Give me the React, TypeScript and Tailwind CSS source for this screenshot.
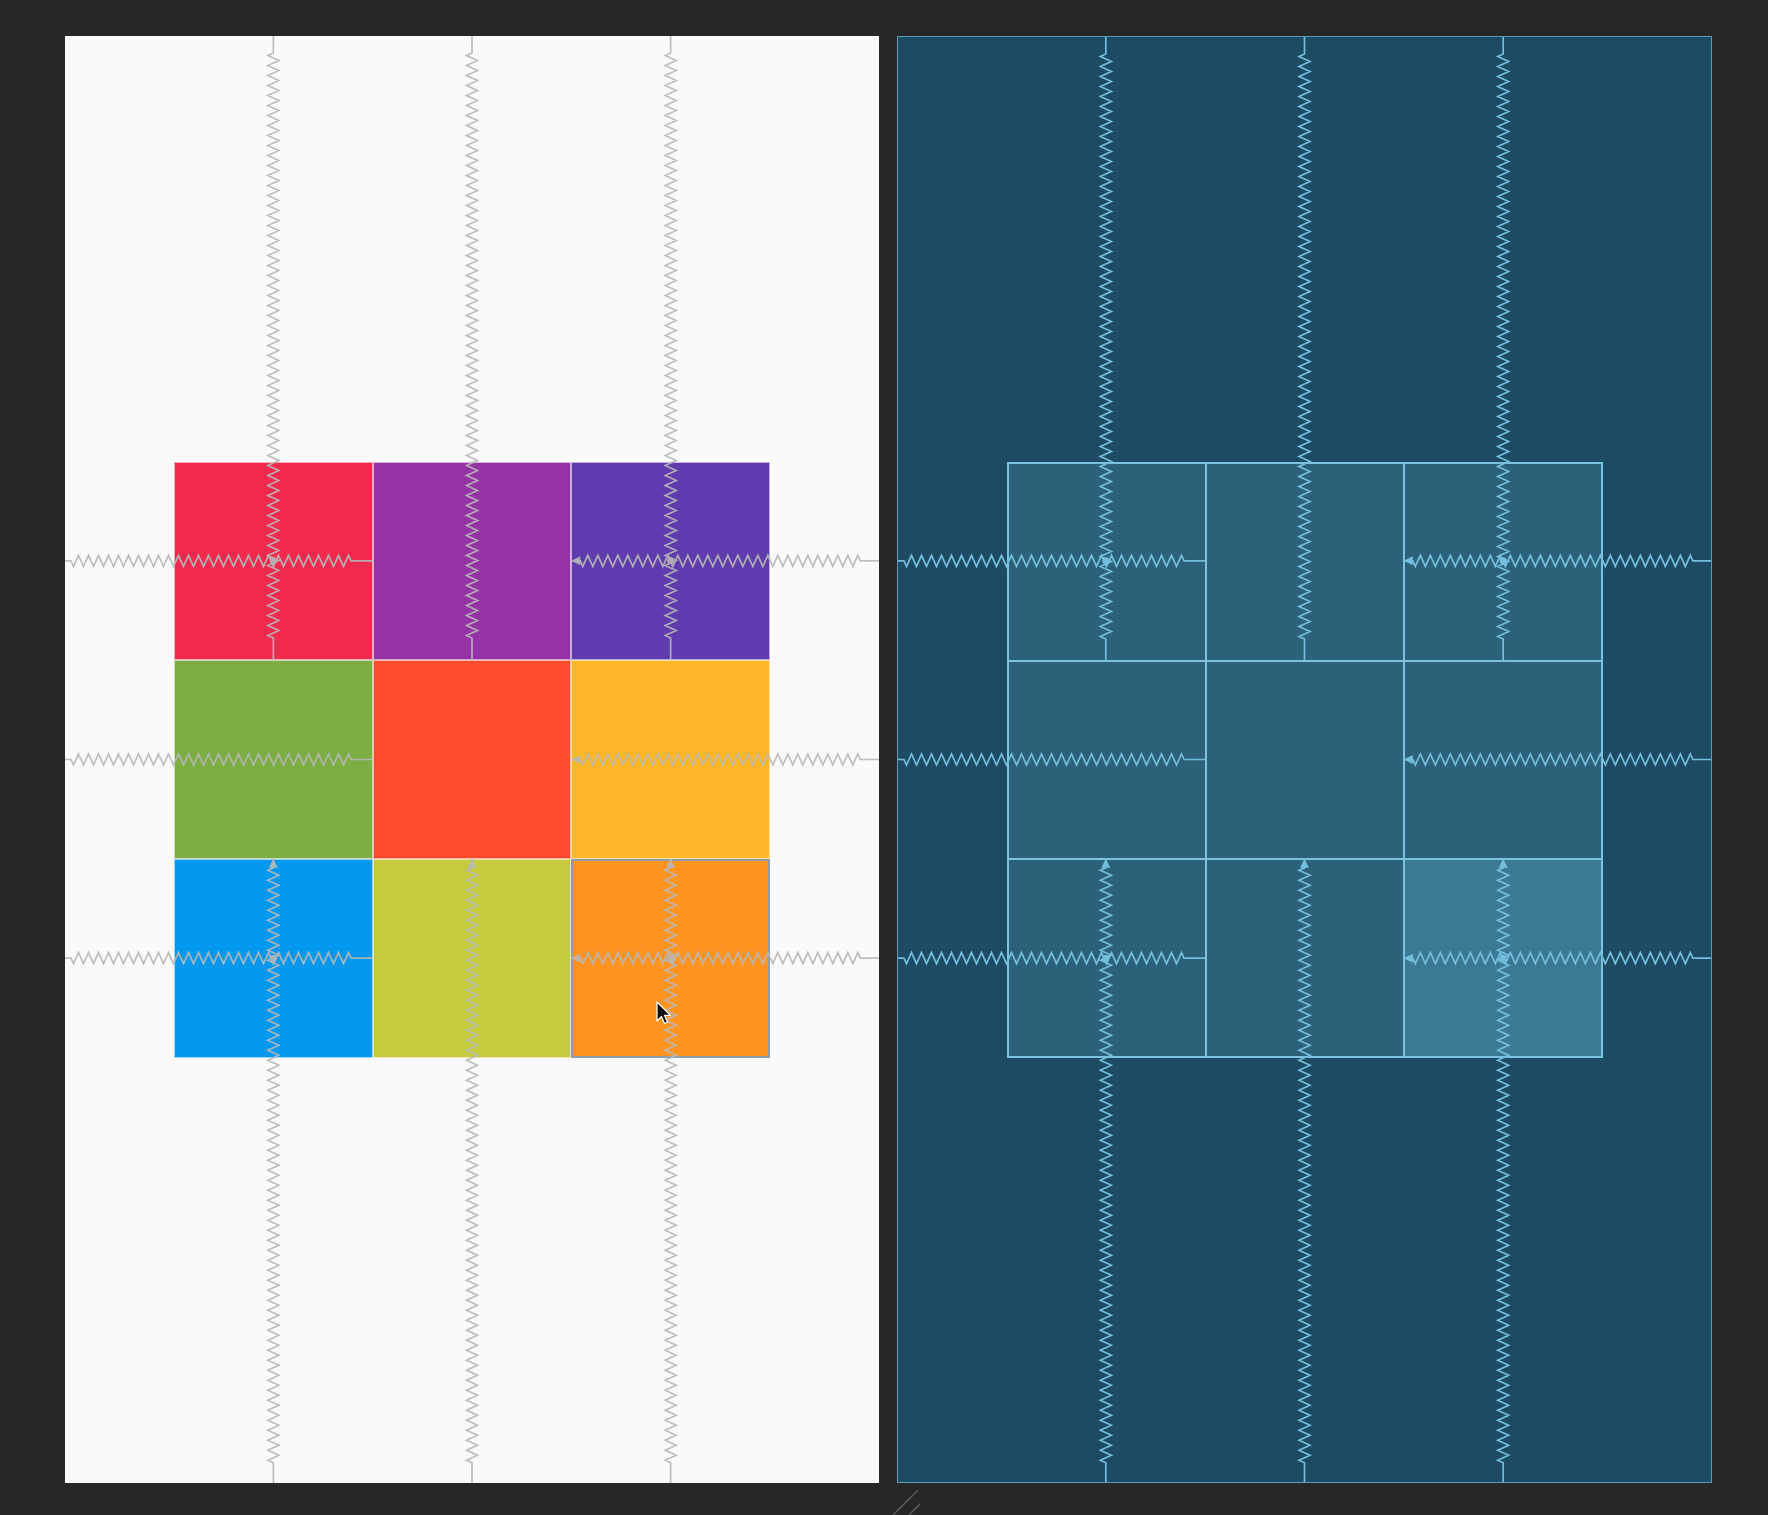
import React from "react";

const G = 596;
const C = G / 3;

type Spring = { x1: number; y1: number; x2: number; y2: number; leadA: number; leadB: number; arrow: boolean };

function springPath(s: Spring, amp = 5.5, period = 10) {
  const dx = s.x2 - s.x1;
  const dy = s.y2 - s.y1;
  const L = Math.hypot(dx, dy);
  const ux = dx / L;
  const uy = dy / L;
  const nx = -uy;
  const ny = ux;
  const hp = period / 2;
  const avail = L - s.leadA - s.leadB;
  const n = Math.max(1, Math.floor(avail / hp));
  const pts: [number, number][] = [];
  const P = (t: number, o: number): [number, number] => [s.x1 + ux * t + nx * o, s.y1 + uy * t + ny * o];
  pts.push(P(0, 0));
  pts.push(P(s.leadA, 0));
  for (let i = 0; i < n; i++) {
    pts.push(P(s.leadA + hp * (i + 0.5), i % 2 === 0 ? amp : -amp));
  }
  pts.push(P(s.leadA + hp * n, 0));
  pts.push(P(L, 0));
  return "M" + pts.map((p) => `${p[0].toFixed(2)},${p[1].toFixed(2)}`).join(" L");
}

function arrowPath(s: Spring) {
  const dx = s.x2 - s.x1;
  const dy = s.y2 - s.y1;
  const L = Math.hypot(dx, dy);
  const ux = dx / L;
  const uy = dy / L;
  const nx = -uy;
  const ny = ux;
  const len = 9;
  const w = 4.5;
  const tip = [s.x1, s.y1];
  const b1 = [s.x1 + ux * len + nx * w, s.y1 + uy * len + ny * w];
  const b2 = [s.x1 + ux * len - nx * w, s.y1 + uy * len - ny * w];
  return `M${tip[0]},${tip[1]} L${b1[0]},${b1[1]} L${b2[0]},${b2[1]} Z`;
}

function buildSprings(w: number, h: number) {
  const gx0 = (w - G) / 2;
  const gy0 = (h - G) / 2;
  const colX = [0, 1, 2].map((i) => gx0 + C * i + C / 2);
  const rowY = [0, 1, 2].map((i) => gy0 + C * i + C / 2);
  const list: Spring[] = [];
  colX.forEach((x) => {
    list.push({ x1: x, y1: 0, x2: x, y2: gy0 + C, leadA: 17, leadB: 19, arrow: false });
    list.push({ x1: x, y1: gy0 + 2 * C, x2: x, y2: h, leadA: 9, leadB: 17, arrow: true });
  });
  rowY.forEach((y) => {
    list.push({ x1: 0, y1: y, x2: gx0 + C, y2: y, leadA: 6, leadB: 21, arrow: false });
    list.push({ x1: gx0 + 2 * C, y1: y, x2: w, y2: y, leadA: 9, leadB: 17, arrow: true });
  });
  const dots: [number, number][] = [
    [colX[0], rowY[0]],
    [colX[2], rowY[0]],
    [colX[0], rowY[2]],
    [colX[2], rowY[2]],
  ];
  return { list, dots };
}

function SpringLayer({ w, h, color, opacity }: { w: number; h: number; color: string; opacity: number }) {
  const { list, dots } = buildSprings(w, h);
  return (
    <svg
      className="absolute inset-0 pointer-events-none"
      width={w}
      height={h}
      viewBox={`0 0 ${w} ${h}`}
    >
      <g opacity={opacity}>
        {list.map((s, i) => (
          <path key={i} d={springPath(s)} fill="none" stroke={color} strokeWidth={1.7} strokeLinejoin="miter" />
        ))}
        {list.filter((s) => s.arrow).map((s, i) => (
          <path key={"a" + i} d={arrowPath(s)} fill={color} />
        ))}
        {dots.map((d, i) => (
          <circle key={"d" + i} cx={d[0]} cy={d[1]} r={3.5} fill={color} />
        ))}
      </g>
    </svg>
  );
}

const leftCells = [
  "bg-[#f0294f]",
  "bg-[#9533a6]",
  "bg-[#5f3bad]",
  "bg-[#7cae44]",
  "bg-[#ff4c2f]",
  "bg-[#ffb627]",
  "bg-[#0598ef]",
  "bg-[#c6cb3d]",
  "bg-[#ff9421]",
];

function Cursor() {
  return (
    <svg className="absolute left-[590px] top-[965px] pointer-events-none" width="18" height="26" viewBox="0 0 18 26">
      <path d="M2,1 L2,20 L6.5,15.5 L9.5,22.5 L12.5,21.2 L9.6,14.4 L15.5,14.4 Z" fill="#111" stroke="#fff" strokeWidth="1.2" strokeLinejoin="round" />
    </svg>
  );
}

function LeftPanel() {
  return (
    <div className="relative w-[814px] h-[1447px] bg-[#fafafa] flex items-center justify-center shrink-0">
      <div className="grid grid-cols-3 grid-rows-3 w-[596px] h-[596px]">
        {leftCells.map((c, i) =>
          i === 8 ? (
            <div key={i} className={`${c} border-2 border-[#8f9ba6]`} />
          ) : (
            <div key={i} className={`${c} border border-white/60`} />
          )
        )}
      </div>
      <SpringLayer w={814} h={1447} color="#b8b8b8" opacity={0.9} />
      <Cursor />
    </div>
  );
}

function RightPanel() {
  return (
    <div className="relative w-[815px] h-[1447px] bg-[#1c4b63] border border-[#5e9bb6] flex items-center justify-center shrink-0">
      <div className="grid grid-cols-3 grid-rows-3 w-[596px] h-[596px] border border-[#7cc2de]">
        {Array.from({ length: 9 }).map((_, i) => (
          <div
            key={i}
            className={
              i === 8
                ? "bg-[#3c7a94] border border-[#7cc2de]"
                : "bg-[#2b6279] border border-[#7cc2de]"
            }
          />
        ))}
      </div>
      <SpringLayer w={813} h={1445} color="#74bddb" opacity={1} />
    </div>
  );
}

export default function App() {
  return (
    <div className="relative w-[1768px] h-[1515px] bg-[#262729] overflow-hidden">
      <div className="flex gap-[18px] pt-[36px] pl-[65px]">
        <LeftPanel />
        <RightPanel />
      </div>
      <svg className="absolute left-[888px] top-[1486px]" width="36" height="29" viewBox="0 0 36 29">
        <line x1="30" y1="4" x2="5" y2="29" stroke="#5a5a5a" strokeWidth="1.5" />
        <line x1="32" y1="18" x2="21" y2="29" stroke="#5a5a5a" strokeWidth="1.5" />
      </svg>
    </div>
  );
}
